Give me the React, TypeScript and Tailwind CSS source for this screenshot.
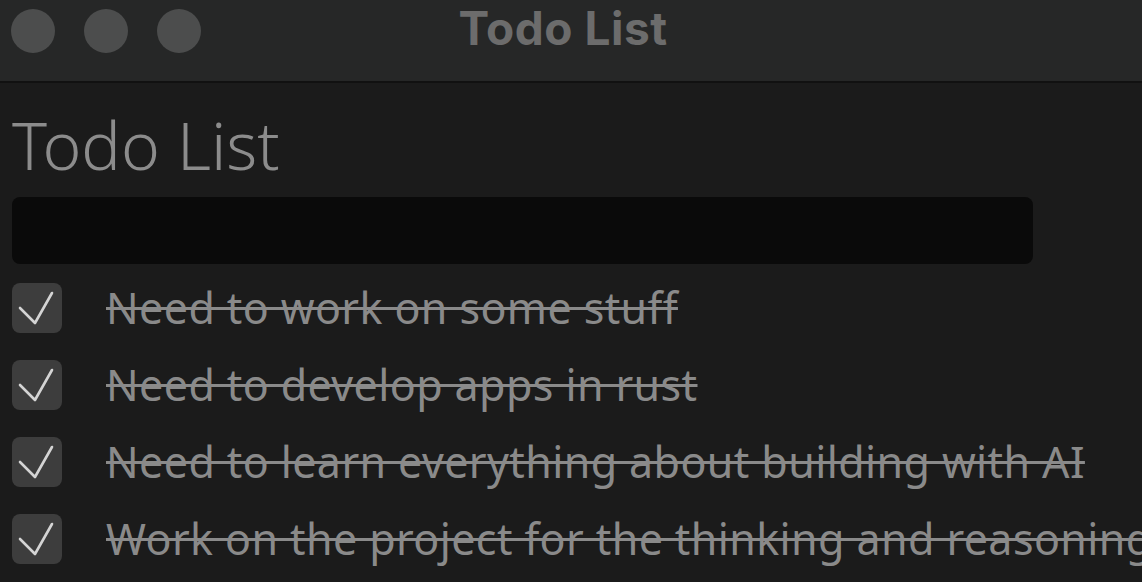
import React from "react";

const items = [
  "Need to work on some stuff",
  "Need to develop apps in rust",
  "Need to learn everything about building with AI",
  "Work on the project for the thinking and reasoning",
];

function Check() {
  return (
    <div className="w-[50px] h-[50px] shrink-0 rounded-[8px] bg-[#3d3d3d]">
      <svg width="50" height="50" viewBox="0 0 50 50" fill="none">
        <path d="M8 25 L23 40 L40 10" stroke="#d4d4d4" strokeWidth="2.6" strokeLinecap="round" strokeLinejoin="round" />
      </svg>
    </div>
  );
}

export default function App() {
  return (
    <div className="w-[1142px] h-[582px] overflow-hidden bg-[#1b1b1b] flex flex-col" style={{ fontFamily: '"Noto Sans", sans-serif' }}>
      <div className="h-[83px] shrink-0 bg-[#262727] border-b-2 border-[#111111] relative flex items-start">
        <div className="flex gap-[29px] pl-[11px] pt-[9px]">
          <div className="w-[44px] h-[44px] rounded-full bg-[#4c4d4d]" />
          <div className="w-[44px] h-[44px] rounded-full bg-[#4c4d4d]" />
          <div className="w-[44px] h-[44px] rounded-full bg-[#4c4d4d]" />
        </div>
        <div className="absolute left-0 right-0 top-0 text-center text-[46px] font-bold tracking-[0.5px] text-[#6c6c6c] leading-[56px] pr-[16px]" style={{ fontFamily: '"Inter", sans-serif' }}>
          Todo List
        </div>
      </div>
      <div className="flex flex-col pl-[12px]">
        <div className="text-[66px] font-light text-[#8c8c8c] leading-[80px] pt-[21px] h-[114px]">Todo List</div>
        <div className="w-[1021px] h-[67px] rounded-[8px] bg-[#0a0a0a]" />
        <div className="flex flex-col gap-[27px] mt-[19px]">
          {items.map((t) => (
            <div key={t} className="flex items-center h-[50px]">
              <Check />
              <span className="ml-[44px] whitespace-nowrap text-[43px] tracking-[0.4px] text-[#8a8a8a] line-through decoration-[2.5px] leading-[50px]">{t}</span>
            </div>
          ))}
        </div>
      </div>
    </div>
  );
}
